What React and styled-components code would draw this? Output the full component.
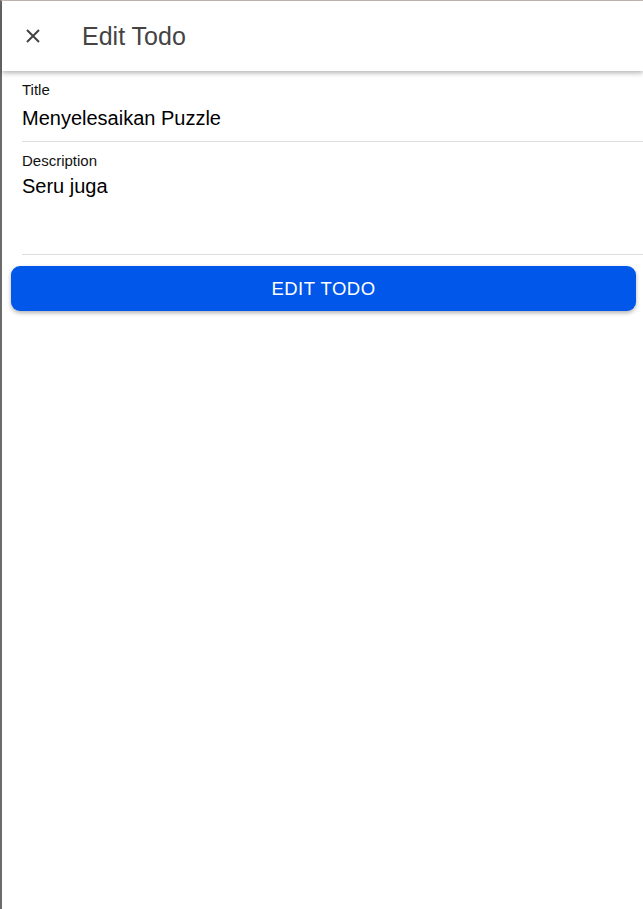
import styled, { createGlobalStyle } from "styled-components";

const GlobalStyle = createGlobalStyle`
  body {
    margin: 0;
    background: #ffffff;
    font-family: "Liberation Sans", Arial, sans-serif;
  }
`;

const Page = styled.div`
  display: flex;
  flex-direction: column;
  min-height: 100vh;
  box-sizing: border-box;
  border-left: 2px solid #6b6b6b;
  border-top: 1px solid #c9bbb5;
`;

const Header = styled.header`
  display: flex;
  align-items: center;
  height: 70px;
  padding-left: 21px;
  background: #ffffff;
  box-shadow: 0 2px 5px rgba(0, 0, 0, 0.3);
  position: relative;
  z-index: 1;
`;

const CloseButton = styled.button`
  display: flex;
  align-items: center;
  justify-content: center;
  width: 20px;
  height: 20px;
  padding: 0;
  border: none;
  background: none;
  color: #444444;
  cursor: pointer;
`;

const Heading = styled.h1`
  margin: 0 0 0 39px;
  font-size: 25px;
  font-weight: 400;
  color: #444444;
`;

const Form = styled.form`
  display: flex;
  flex-direction: column;
  padding: 10px 7px 0 9px;
`;

const Field = styled.label`
  display: flex;
  flex-direction: column;
  gap: ${({ $gap }) => $gap}px;
  margin-left: 11px;
  margin-right: -7px;
  padding-top: ${({ $top }) => $top || 0}px;
  border-bottom: 1px solid #dddddd;
  min-height: ${({ $height }) => $height}px;
  box-sizing: border-box;
`;

const Label = styled.span`
  font-size: 15px;
  color: #111111;
  line-height: 17px;
`;

const Value = styled.span`
  font-size: 20px;
  color: #000000;
  line-height: 24px;
`;

const SubmitButton = styled.button`
  margin-top: 11px;
  height: 45px;
  border: none;
  border-radius: 9px;
  background: #0157ea;
  color: #ffffff;
  font-family: "Liberation Sans", Arial, sans-serif;
  font-size: 18.5px;
  letter-spacing: 0.5px;
  text-transform: uppercase;
  box-shadow: 0 2px 4px rgba(0, 0, 0, 0.3);
  cursor: pointer;
`;

export default function App() {
  return (
    <>
      <GlobalStyle />
      <Page>
        <Header>
          <CloseButton aria-label="close">
            <svg width="14" height="14" viewBox="0 0 14 14">
              <path
                d="M1 1 L13 13 M13 1 L1 13"
                stroke="currentColor"
                strokeWidth="2"
              />
            </svg>
          </CloseButton>
          <Heading>Edit Todo</Heading>
        </Header>
        <Form onSubmit={(e) => e.preventDefault()}>
          <Field $height={61} $gap={8}>
            <Label>Title</Label>
            <Value>Menyelesaikan Puzzle</Value>
          </Field>
          <Field $height={113} $top={10} $gap={5}>
            <Label>Description</Label>
            <Value>Seru juga</Value>
          </Field>
          <SubmitButton type="submit">Edit Todo</SubmitButton>
        </Form>
      </Page>
    </>
  );
}
